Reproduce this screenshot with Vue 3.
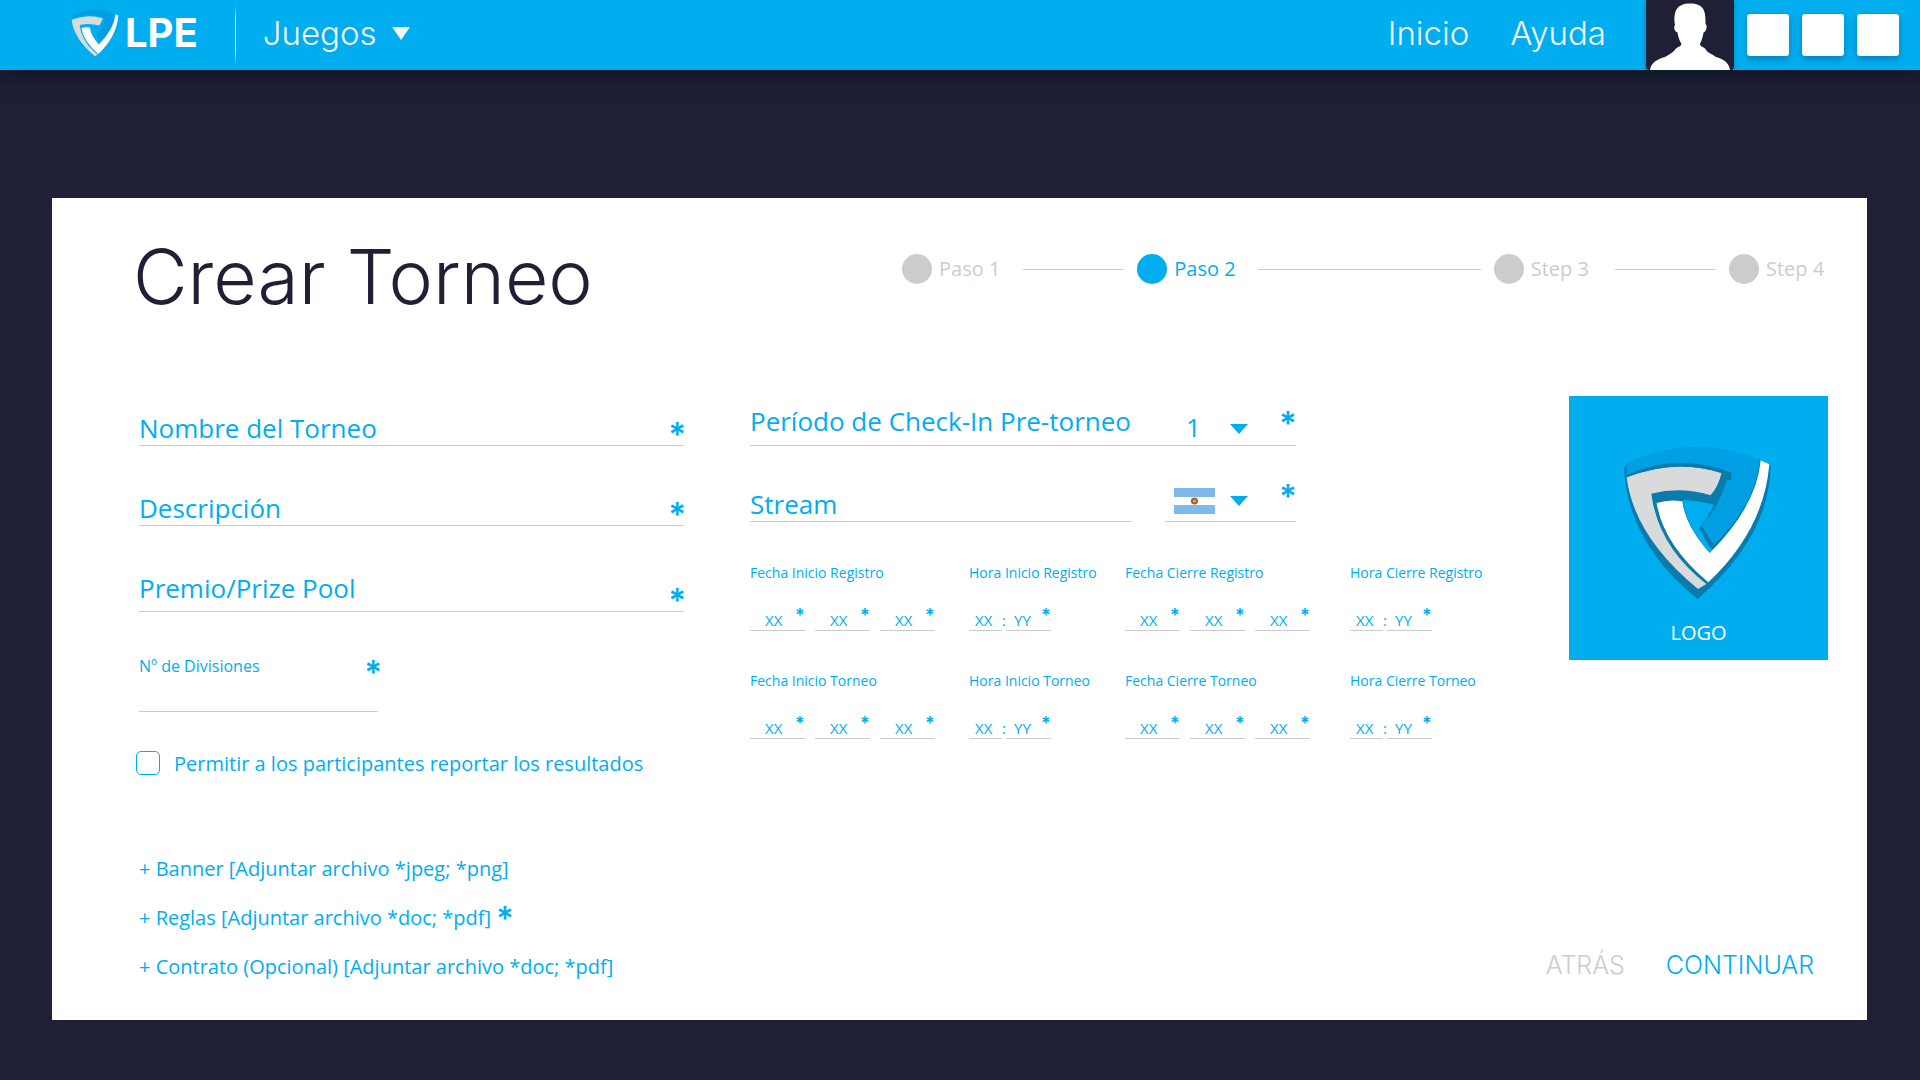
<script setup>
import { ref } from 'vue'

const steps = [
  { label: 'Paso 1', span: 101 },
  { label: 'Paso 2', span: 222, active: true },
  { label: 'Step 3', span: 101 },
  { label: 'Step 4' },
]

const schedule = [
  { id: 'fir', label: 'Fecha Inicio Registro', type: 'date' },
  { id: 'hir', label: 'Hora Inicio Registro', type: 'time' },
  { id: 'fcr', label: 'Fecha Cierre Registro', type: 'date' },
  { id: 'hcr', label: 'Hora Cierre Registro', type: 'time' },
  { id: 'fit', label: 'Fecha Inicio Torneo', type: 'date' },
  { id: 'hit', label: 'Hora Inicio Torneo', type: 'time' },
  { id: 'fct', label: 'Fecha Cierre Torneo', type: 'date' },
  { id: 'hct', label: 'Hora Cierre Torneo', type: 'time' },
]

const dateParts = ['día', 'mes', 'año']

const files = [
  { text: '+ Banner [Adjuntar archivo *jpeg; *png]' },
  { text: '+ Reglas [Adjuntar archivo *doc; *pdf]', required: true },
  { text: '+ Contrato (Opcional) [Adjuntar archivo *doc; *pdf]' },
]

const shield = [
  { fill: '#009fe3', d: 'M228 287 L228 250 Q430 158 628 240 Q616 372 490 495 L452 437 Q505 385 530 296 L543 283 Q385 215 228 287 Z' },
  { fill: '#d9dadb', d: 'M228 293 Q375 235 513 280 Q503 322 480 347 Q390 320 302 342 Q322 500 467 613 L442 628 Q250 470 228 293 Z' },
  { fill: '#ffffff', d: 'M318 370 Q355 358 395 365 Q405 440 477 520 Q618 380 630 242 L656 254 Q640 450 473 608 Q338 495 318 370 Z' },
]

const checkIn = ref('1')
const country = ref('AR')
const report = ref(false)
</script>

<template>
  <div class="page">
    <header class="topbar">
      <a class="brand" href="#">
        <svg class="brand-mark" viewBox="225 195 435 440" aria-hidden="true">
          <path v-for="p in shield" :key="p.fill" :fill="p.fill" :d="p.d" />
        </svg>
        <span>LPE</span>
      </a>
      <span class="divider"></span>
      <button class="games" type="button">
        Juegos
        <svg width="18" height="13" viewBox="0 0 18 13" aria-hidden="true"><path fill="currentColor" d="M0 0h18L9 13z" /></svg>
      </button>
      <nav class="links">
        <a href="#">Inicio</a>
        <a href="#">Ayuda</a>
      </nav>
      <button class="avatar" type="button" aria-label="Perfil">
        <svg width="88" height="70" viewBox="0 0 88 70" aria-hidden="true">
          <path fill="#fff" d="M4 70C5 62 12 59 19 57C24 54 27 52 29 50C30 47 35 47 35.500 44C33 40 32 36 31.500 32.500C29 32 27 27 29 25C27 11 31 3.500 44 3.500C57 3.500 60 10 59.500 24C62 26 60 32 57.500 32.500C57 36 56 40 54 44C54 47 59 47 60 50C62 53 66 54 70 57C77 59 83 62 84 70Z" />
        </svg>
      </button>
      <div class="tools">
        <button type="button" aria-label="Mensajes"></button>
        <button type="button" aria-label="Notificaciones"></button>
        <button type="button" aria-label="Ajustes"></button>
      </div>
    </header>

    <main class="card">
      <div class="card-head">
        <h1>Crear Torneo</h1>
        <ol class="steps">
          <template v-for="s in steps" :key="s.label">
            <li :class="{ active: s.active }">
              <span class="dot"></span>
              <span class="step-label">{{ s.label }}</span>
            </li>
            <li v-if="s.span" class="track" :style="{ flexGrow: s.span }" aria-hidden="true"></li>
          </template>
        </ol>
      </div>

      <form @submit.prevent>
        <div class="columns">
          <section class="basics">
            <div class="field">
              <input type="text" placeholder="Nombre del Torneo" aria-label="Nombre del Torneo" />
              <span class="req">*</span>
            </div>
            <div class="field">
              <input type="text" placeholder="Descripción" aria-label="Descripción" />
              <span class="req">*</span>
            </div>
            <div class="field tall">
              <input type="text" placeholder="Premio/Prize Pool" aria-label="Premio/Prize Pool" />
              <span class="req">*</span>
            </div>
            <div class="divisions">
              <div class="divisions-head">
                <label for="divisions">Nº de Divisiones</label>
                <span class="req">*</span>
              </div>
              <input id="divisions" type="text" />
            </div>
            <div class="check">
              <input id="report" v-model="report" type="checkbox" />
              <label for="report">Permitir a los participantes reportar los resultados</label>
            </div>
          </section>

          <section class="details">
            <div class="line checkin">
              <label for="checkin">Período de Check-In Pre-torneo</label>
              <span class="pick">
                <select id="checkin" v-model="checkIn">
                  <option>1</option>
                  <option>2</option>
                  <option>3</option>
                </select>
                <svg class="caret" width="18" height="10" viewBox="0 0 18 10" aria-hidden="true"><path fill="currentColor" d="M0 0h18L9 10z" /></svg>
              </span>
              <span class="req">*</span>
            </div>
            <div class="stream-row">
              <div class="line stream">
                <input type="text" placeholder="Stream" aria-label="Stream" />
              </div>
              <div class="line region">
                <span class="pick">
                  <svg width="41" height="26" viewBox="0 0 41 26" aria-hidden="true">
                    <rect width="41" height="26" fill="#fff" />
                    <rect width="41" height="9" fill="#7fb9ec" />
                    <rect y="17" width="41" height="9" fill="#7fb9ec" />
                    <circle cx="20.500" cy="13" r="3.600" fill="#a0642f" />
                    <circle cx="20.500" cy="13" r="1.600" fill="#f0a13a" />
                  </svg>
                  <svg class="caret" width="18" height="10" viewBox="0 0 18 10" aria-hidden="true"><path fill="currentColor" d="M0 0h18L9 10z" /></svg>
                  <select v-model="country" class="ghost" aria-label="País">
                    <option value="AR">Argentina</option>
                    <option value="CL">Chile</option>
                    <option value="UY">Uruguay</option>
                  </select>
                </span>
                <span class="req">*</span>
              </div>
            </div>

            <div class="schedule">
              <div v-for="s in schedule" :key="s.id" class="slot">
                <label :for="s.id">{{ s.label }}</label>
                <div v-if="s.type === 'date'" class="parts date">
                  <span v-for="(part, i) in dateParts" :key="part" class="part">
                    <input :id="i === 0 ? s.id : undefined" type="text" placeholder="XX" :aria-label="s.label + ', ' + part" />
                    <span class="req small">*</span>
                  </span>
                </div>
                <div v-else class="parts time">
                  <span class="part hour">
                    <input :id="s.id" type="text" placeholder="XX" :aria-label="s.label + ', hora'" />
                  </span>
                  <span class="colon">:</span>
                  <span class="part minute">
                    <input type="text" placeholder="YY" :aria-label="s.label + ', minutos'" />
                    <span class="req small">*</span>
                  </span>
                </div>
              </div>
            </div>
          </section>

          <button class="logo-tile" type="button">
            <svg width="153" height="160" viewBox="214 190 459 480" aria-hidden="true">
              <path fill="#0a7cab" d="M220 264 L228 250 L630 240 L660 256 Q658 470 441 658 Q230 490 220 264 Z" />
              <path fill="#00aef0" d="M210 190 H673 V250 L656 254 L630 240 L228 250 L222 264 L210 264 Z" />
              <path fill="#00aef0" d="M397 361 Q450 364 490 375 Q475 410 446 445 Q460 480 485 510 L477 520 Q405 440 397 361 Z" />
              <path v-for="p in shield" :key="p.fill" :fill="p.fill" :d="p.d" />
              <path fill="#0a7cab" d="M228 287 Q380 215 543 279 L540 302 L520 301 Q508 340 492 372 L480 347 Q503 322 513 280 Q375 235 228 293 Z" />
            </svg>
            <span>LOGO</span>
          </button>
        </div>

        <div class="card-foot">
          <ul class="files">
            <li v-for="f in files" :key="f.text">
              <button type="button">{{ f.text }}</button>
              <span v-if="f.required" class="req">*</span>
            </li>
          </ul>
          <div class="actions">
            <button class="back" type="button">ATRÁS</button>
            <button class="next" type="submit">CONTINUAR</button>
          </div>
        </div>
      </form>
    </main>
  </div>
</template>

<style>
body {
  margin: 0;
  background: #1f2035;
}
</style>

<style scoped>
* {
  box-sizing: border-box;
}

.page {
  min-height: 100vh;
  padding-bottom: 60px;
  background: #1f2035;
  color: #00aef0;
  font-family: "Open Sans", "Noto Sans", sans-serif;
  font-weight: 400;
}

button,
input,
select {
  margin: 0;
  padding: 0;
  border: 0;
  border-radius: 0;
  background: none;
  color: inherit;
  font: inherit;
  outline-offset: 2px;
}

button {
  cursor: pointer;
}

input {
  min-width: 0;
}

input::placeholder {
  color: #00aef0;
  opacity: 1;
}

a {
  color: inherit;
  text-decoration: none;
}

svg {
  display: block;
  flex: none;
}

ol,
ul {
  margin: 0;
  padding: 0;
  list-style: none;
}

/* Top bar */
.topbar {
  display: flex;
  align-items: center;
  height: 70px;
  padding: 0 21px 0 71px;
  background: #00aef0;
  box-shadow: 0 4px 28px rgba(0, 16, 28, 0.8);
  color: #f4f6f8;
  font-family: Inter, sans-serif;
  font-size: 33px;
  font-weight: 300;
}

.brand {
  display: flex;
  align-items: center;
  gap: 6px;
  padding-bottom: 4px;
  color: #fff;
  font-size: 40px;
  font-weight: 700;
  line-height: 48px;
}

.brand-mark {
  width: 48px;
  height: 48px;
}

.divider {
  width: 1px;
  height: 60px;
  margin: 0 27px 0 37px;
  background: linear-gradient(rgba(255, 255, 255, 0), #fff 30%, #fff 70%, rgba(255, 255, 255, 0));
}

.games {
  display: flex;
  align-items: center;
  gap: 15px;
  padding-bottom: 4px;
}

.links {
  display: flex;
  gap: 41px;
  margin-left: auto;
  padding-bottom: 4px;
}

.avatar {
  height: 70px;
  margin-left: 40px;
  background: #1f2035;
  border-radius: 0 0 4px 4px;
  box-shadow: 0 2px 4px rgba(0, 40, 70, 0.4);
}

.tools {
  display: flex;
  gap: 13px;
  margin-left: 13px;
}

.tools button {
  width: 42px;
  height: 42px;
  border-radius: 3px;
  background: #fff;
  box-shadow: 0 3px 7px rgba(0, 60, 100, 0.4);
}

/* Card */
.card {
  margin: 128px 53px 0 52px;
  padding: 37px 39px 39px 87px;
  background: #fff;
}

.card-head {
  display: flex;
  align-items: flex-start;
  justify-content: space-between;
  margin: 0 -6px 77px -6px;
}

h1 {
  margin: 0;
  color: #1f2035;
  font-family: Inter, sans-serif;
  font-size: 75px;
  font-weight: 300;
  line-height: 84px;
}

.steps {
  display: flex;
  align-items: center;
  width: 932px;
  max-width: 55%;
  margin-top: 19px;
  color: #ccc;
  font-size: 20px;
  line-height: 30px;
}

.steps li {
  display: flex;
  flex: none;
  gap: 7px;
}

.steps .track {
  flex: 1 1 0;
  height: 1px;
  margin: 0 13px 0 16px;
  background: #ccc;
}

.dot {
  width: 30px;
  height: 30px;
  border-radius: 50%;
  background: #ccc;
}

.step-label {
  width: 68px;
  white-space: nowrap;
}

.active {
  color: #00aef0;
}

.active .dot {
  background: #00aef0;
}

.columns {
  display: grid;
  grid-template-columns: minmax(0, 545fr) minmax(0, 753fr) minmax(0, 259fr);
  column-gap: 66px;
  align-items: start;
}

.req {
  flex: none;
  height: 34px;
  margin-right: -2px;
  font-family: Inter, sans-serif;
  font-size: 33px;
  font-weight: 600;
  line-height: 46px;
}

.req.small {
  height: 20px;
  margin-right: 0;
  font-size: 18px;
  line-height: 28px;
}

/* Left column */
.field {
  display: flex;
  align-items: flex-end;
  height: 50px;
  border-bottom: 1px solid #ccc;
  font-size: 26px;
}

.field + .field {
  margin-top: 30px;
}

.field input {
  flex: 1;
  height: 34px;
  line-height: 34px;
}

.field.tall {
  height: 56px;
}

.field.tall input {
  margin-bottom: 6px;
}

.divisions {
  width: 239px;
  margin-top: 41px;
}

.divisions-head {
  display: flex;
  align-items: center;
  justify-content: space-between;
  height: 26px;
  margin-right: -2px;
  font-size: 16px;
}

.divisions input {
  display: block;
  width: 100%;
  height: 33px;
  border-bottom: 1px solid #ccc;
  font-size: 20px;
}

.check {
  display: flex;
  align-items: center;
  gap: 14px;
  height: 24px;
  margin-top: 39px;
  margin-left: -3px;
  font-size: 20px;
}

.check input {
  appearance: none;
  flex: none;
  width: 24px;
  height: 24px;
  border: 1px solid #00aef0;
  border-radius: 5px;
}

.check input:checked {
  background: #00aef0;
}

/* Middle column */
.line {
  display: flex;
  align-items: flex-start;
  border-bottom: 1px solid #ccc;
  font-size: 26px;
}

.checkin {
  max-width: 546px;
  height: 50px;
  line-height: 34px;
}

.checkin label {
  margin-top: 8px;
  white-space: nowrap;
}

.pick {
  position: relative;
  display: flex;
  align-items: center;
  gap: 15px;
  height: 34px;
  margin-left: auto;
}

.checkin .pick {
  gap: 30px;
  margin-top: 14px;
}

.checkin .caret {
  margin-top: 4px;
}

.checkin select {
  appearance: none;
  width: 14px;
  height: 34px;
  line-height: 34px;
}

.line .req {
  width: 19px;
  margin-top: 4px;
  margin-left: 31px;
}

.stream-row {
  display: flex;
  gap: 33px;
  max-width: 546px;
  margin-top: 30px;
}

.stream-row .line {
  height: 46px;
}

.stream {
  flex: 1;
}

.stream input {
  width: 100%;
  height: 34px;
  margin-top: 11px;
}

.region {
  width: 131px;
}

.region .pick {
  margin-top: 8px;
}

.ghost {
  position: absolute;
  inset: 0;
  opacity: 0;
}

.region .req {
  margin-top: 0;
  line-height: 40px;
}

.schedule {
  display: grid;
  grid-template-columns: 219fr 156fr 225fr 153fr;
  row-gap: 40px;
  margin-top: 41px;
  font-size: 15px;
  line-height: 20px;
}

.slot label {
  display: block;
  font-size: 14px;
  white-space: nowrap;
}

.parts {
  display: flex;
  margin-top: 19px;
}

.date {
  gap: 10px;
}

.part {
  display: flex;
  align-items: flex-start;
  width: 55px;
  height: 29px;
  padding-left: 15px;
  border-bottom: 1px solid #ccc;
}

.part input {
  flex: 1;
  height: 20px;
  margin-top: 8px;
}

.part .req {
  width: 10px;
}

.part.hour {
  width: 33px;
  padding-left: 6px;
}

.colon {
  width: 4px;
  padding-top: 8px;
}

.part.minute {
  width: 45px;
  padding-left: 8px;
}

/* Logo tile */
.logo-tile {
  display: flex;
  flex-direction: column;
  align-items: center;
  gap: 16px;
  height: 264px;
  padding-top: 47px;
  background: #00aef0;
  color: #fff;
  font-size: 20px;
  line-height: 28px;
}

/* Footer */
.card-foot {
  display: flex;
  align-items: flex-end;
  justify-content: space-between;
  margin-top: 80px;
}

.files {
  display: flex;
  flex-direction: column;
  gap: 21px;
  font-size: 20px;
  line-height: 28px;
}

.files li {
  display: flex;
  height: 28px;
  gap: 5px;
}

.files .req {
  line-height: 28px;
}

.actions {
  display: flex;
  gap: 41px;
  margin-right: 14px;
  padding-bottom: 2px;
  font-family: Inter, sans-serif;
  font-size: 25px;
  font-weight: 300;
  line-height: 28px;
}

.back {
  color: #ccc;
}
</style>
